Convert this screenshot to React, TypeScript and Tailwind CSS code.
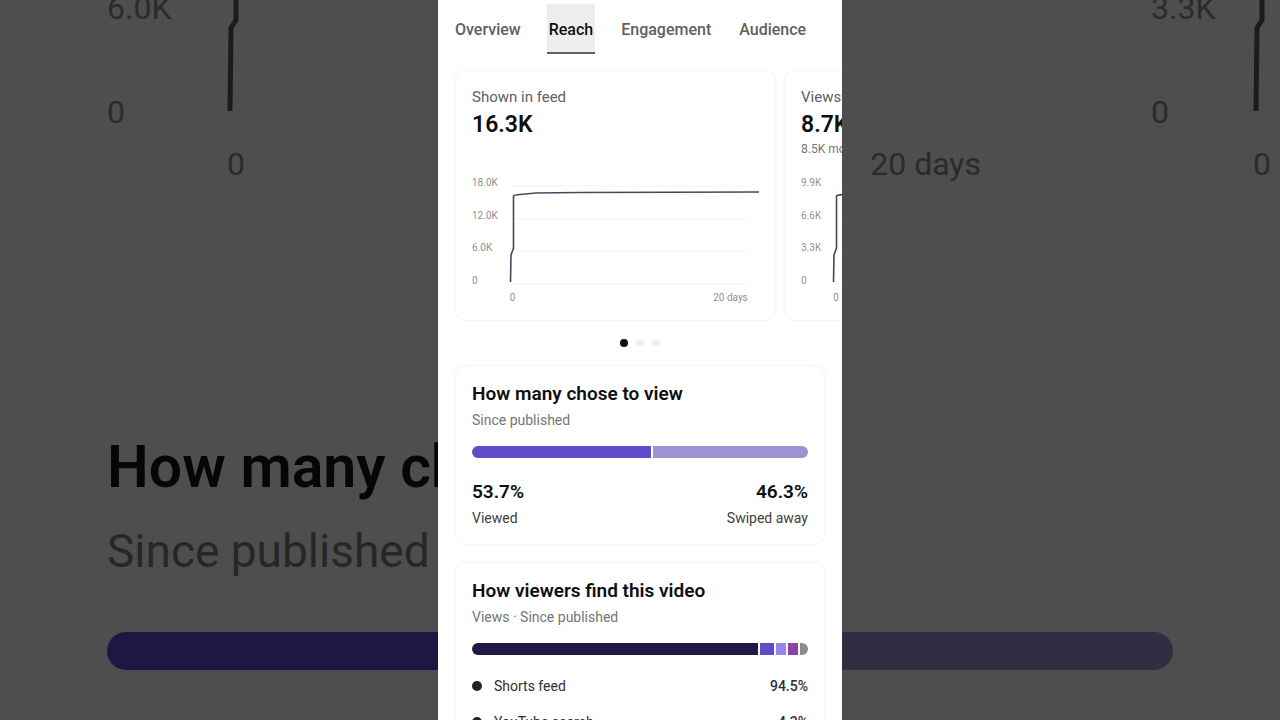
import React, { useState } from 'react';

interface Segment {
  label: string;
  value: string;
  width: number;
  color: string;
}

interface ReachStat {
  label: string;
  value: string;
  note?: string;
  ticks: string[];
}

const tabs = ['Overview', 'Reach', 'Engagement', 'Audience'];

const stats: ReachStat[] = [
  { label: 'Shown in feed', value: '16.3K', ticks: ['18.0K', '12.0K', '6.0K', '0'] },
  { label: 'Views', value: '8.7K', note: '8.5K more', ticks: ['9.9K', '6.6K', '3.3K', '0'] },
];

const choices: Segment[] = [
  { label: 'Viewed', value: '53.7%', width: 180, color: '#604bc8' },
  { label: 'Swiped away', value: '46.3%', width: 155, color: '#9d92d3' },
];

const sources: Segment[] = [
  { label: 'Shorts feed', value: '94.5%', width: 286, color: '#211849' },
  { label: 'YouTube search', value: '4.3%', width: 14, color: '#604bc8' },
  { label: 'Channel pages', value: '0.6%', width: 10, color: '#9288ea' },
  { label: 'Browse features', value: '0.4%', width: 10, color: '#9140a8' },
  { label: 'Others', value: '0.2%', width: 8, color: '#8c8c8c' },
];

const SegmentBar = ({ segments }: { segments: Segment[] }) => (
  <div className="mt-4 flex h-3 gap-0.5 overflow-hidden rounded-full">
    {segments.map(s => (
      <div key={s.label} style={{ flexGrow: s.width, backgroundColor: s.color }} />
    ))}
  </div>
);

const Card = ({ title, subtitle, children }: { title: string; subtitle: string; children: React.ReactNode }) => (
  <section className="mx-[17px] rounded-xl border border-[#f6f6f6] p-4 shadow-[0_0_4px_#f5f5f5]">
    <h2 className="text-[19px] leading-6 font-semibold text-[#0f0f0f]">{title}</h2>
    <p className="mt-1 text-sm leading-5 text-[#757575]">{subtitle}</p>
    {children}
  </section>
);

const StatCard = ({ stat }: { stat: ReachStat }) => (
  <section className="w-[321px] shrink-0 rounded-xl border border-[#f6f6f6] p-4 shadow-[0_0_4px_#f5f5f5]">
    <h2 className="text-[15px] leading-5 text-[#606060]">{stat.label}</h2>
    <p className="text-[23px] leading-9 font-semibold text-[#0f0f0f]">{stat.value}</p>
    <p className="h-4 text-xs leading-3 whitespace-nowrap text-[#757575]">{stat.note}</p>
    <div className="mt-[18px] flex gap-[10px] text-[10px] leading-3 text-[#909090]">
      <div className="flex h-[110px] flex-col justify-between">
        {stat.ticks.map(t => (
          <span key={t}>{t}</span>
        ))}
      </div>
      <div className="-mr-2 flex-1">
        <svg viewBox="0 0 252 110" className="block h-[110px] w-[252px]" fill="none">
          <path d="M4 9H240M4 42H240M4 74H240M4 107H240" stroke="#f7f7f7" strokeWidth="1.5" />
          <path d="M2.5 105L3 78L5.5 71L5.5 19Q6 18 12 17.500L28 16L70 15.500L251 15" stroke="#4b4660" strokeWidth="1.600" />
        </svg>
        <div className="mt-[5px] flex w-60 justify-between pl-0.5">
          <span>0</span>
          <span>20 days</span>
        </div>
      </div>
    </div>
  </section>
);

const BackdropChart = ({ tick, tickWidth }: { tick: string; tickWidth: string }) => (
  <div className="flex w-[1044px] shrink-0 text-[32px] leading-10 text-[#2b2b2b]">
    <div className={`flex h-[132px] shrink-0 flex-col justify-between ${tickWidth}`}>
      <span className="-mt-3">{tick}</span>
      <span>0</span>
    </div>
    <div className="w-[754px]">
      <svg viewBox="0 0 20 112" className="block h-28 w-5" fill="none">
        <path d="M3 111L4 28L9 20L9 0" stroke="#1c1c1c" strokeWidth="5" />
      </svg>
      <div className="mt-8 flex justify-between">
        <span>0</span>
        <span>20 days</span>
      </div>
    </div>
  </div>
);

// Enlarged, dimmed copy of the page that fills the space beside the phone column
const Backdrop = () => (
  <div aria-hidden="true" className="col-start-1 row-start-1 overflow-hidden bg-[#4e4e4e] pl-[107px]">
    <div className="flex">
      <BackdropChart tick="6.0K" tickWidth="w-[120px]" />
      <BackdropChart tick="3.3K" tickWidth="w-[102px]" />
    </div>
    <p className="mt-[243px] text-[59px] leading-[80px] font-semibold whitespace-nowrap text-[#060606]">How many ch</p>
    <p className="mt-3 text-[46px] leading-[64px] text-[#272727]">Since published</p>
    <div className="mt-[49px] mr-[107px] flex h-[38px] gap-1.5 overflow-hidden rounded-full">
      <div className="grow-[54] bg-[#1e1643]" />
      <div className="grow-[46] bg-[#322d43]" />
    </div>
  </div>
);

const App: React.FC = () => {
  const [activeTab, setActiveTab] = useState('Reach');
  const [slide, setSlide] = useState(0);

  return (
    <div className="grid h-screen grid-cols-1 grid-rows-1 overflow-hidden font-['Roboto',sans-serif]">
      <Backdrop />

      <main className="relative col-start-1 row-start-1 w-[404px] justify-self-center overflow-hidden bg-white">
        {/* Tabs */}
        <nav className="flex gap-6 px-[15px] pt-1">
          {tabs.map(tab => (
            <button
              key={tab}
              type="button"
              onClick={() => setActiveTab(tab)}
              className={
                tab === activeTab
                  ? 'h-[50px] border-b-2 border-[#606060] bg-[#eeeeee] px-0.5 pt-1 text-base font-medium text-[#0f0f0f]'
                  : 'h-[50px] border-b-2 border-transparent px-0.5 pt-1 text-base font-medium text-[#606060]'
              }
            >
              {tab}
            </button>
          ))}
        </nav>

        {/* Stat carousel */}
        <div className="mt-4 flex gap-2 overflow-hidden pl-[17px]">
          {stats.map(s => (
            <StatCard key={s.label} stat={s} />
          ))}
        </div>
        <div className="flex h-11 items-center justify-center gap-2">
          {[0, 1, 2].map(i => (
            <button
              key={i}
              type="button"
              aria-label={`Slide ${i + 1}`}
              onClick={() => setSlide(i)}
              className={i === slide ? 'size-2 rounded-full bg-[#0f0f0f]' : 'size-2 rounded-full bg-[#efefef]'}
            />
          ))}
        </div>

        <Card title="How many chose to view" subtitle="Since published">
          <SegmentBar segments={choices} />
          <dl className="mt-[22px] flex justify-between">
            {choices.map(c => (
              <div key={c.label} className="flex flex-col-reverse gap-1 last:text-right">
                <dt className="text-sm leading-5 text-[#404040]">{c.label}</dt>
                <dd className="text-[19px] leading-6 font-semibold text-[#0f0f0f]">{c.value}</dd>
              </div>
            ))}
          </dl>
        </Card>

        <div className="h-[17px]" />

        <Card title="How viewers find this video" subtitle="Views · Since published">
          <SegmentBar segments={sources} />
          <ul className="mt-[21px] flex flex-col gap-4">
            {sources.slice(0, 2).map(s => (
              <li key={s.label} className="flex items-center text-sm leading-5 text-[#303030]">
                <span className="mr-3 size-[10px] rounded-full bg-[#222222]" />
                {s.label}
                <span className="ml-auto font-medium">{s.value}</span>
              </li>
            ))}
          </ul>
        </Card>
      </main>
    </div>
  );
};

export default App;
